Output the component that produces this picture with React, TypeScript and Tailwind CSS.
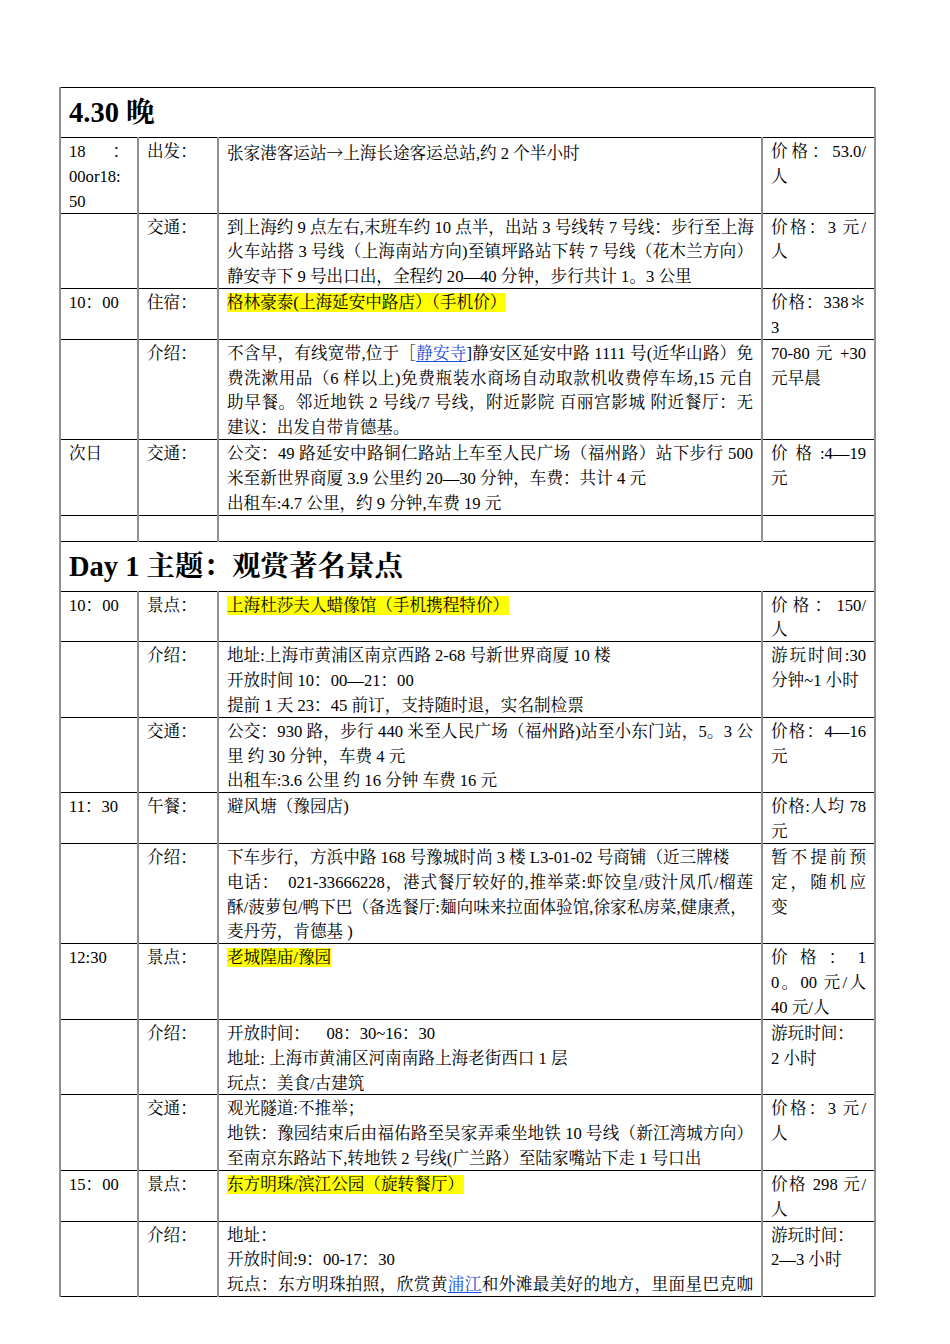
import { ReactNode } from "react";

// one visual line of a cell; `j` stretches it to the cell width like Word's justify
const Ln = ({ children, j }: { children: ReactNode; j?: boolean }) => (
  <div className={j ? "whitespace-nowrap [text-align-last:justify]" : "whitespace-nowrap"}>
    {children}
  </div>
);

const Hl = ({ children }: { children: ReactNode }) => (
  <span className="bg-[#ffff00]">{children}</span>
);

const A = ({ children }: { children: ReactNode }) => (
  <span className="text-[#1d4fd8] underline underline-offset-2">{children}</span>
);

const cell =
  "align-top px-2 border-y border-y-black border-x-2 border-x-[#8f8f8f]";

// shift glyphs down a little without changing the row height
const Box = ({ children }: { children: ReactNode }) => (
  <div className="pt-[2px] -mb-[2px]">{children}</div>
);

const Row = ({
  time,
  label,
  body,
  price,
}: {
  time?: ReactNode;
  label?: string;
  body?: ReactNode;
  price?: ReactNode;
}) => (
  <tr>
    <td className={cell}>
      <Box>{time}</Box>
    </td>
    <td className={cell}>
      <Box>{label && <Ln>{label}</Ln>}</Box>
    </td>
    <td className={cell}>
      <Box>{body}</Box>
    </td>
    <td className={cell}>
      <Box>{price}</Box>
    </td>
  </tr>
);

const Title = ({ children }: { children: ReactNode }) => (
  <tr>
    <td
      colSpan={4}
      className="h-[49px] align-middle px-2 border-y border-y-black border-x-2 border-x-[#8f8f8f] text-[28.5px] font-bold leading-[49px]"
    >
      {children}
    </td>
  </tr>
);

export default function App() {
  return (
    <div className="min-h-[1344px] bg-white pt-[87px] pl-[59px] text-black font-['Liberation_Serif','Noto_Serif_CJK_SC','Noto_Sans_CJK_SC',serif] text-[16.6px] leading-[24.85px]">
      <table className="table-fixed border-collapse w-[815px]">
        <colgroup>
          <col className="w-[78px]" />
          <col className="w-[80px]" />
          <col className="w-[544px]" />
          <col className="w-[113px]" />
        </colgroup>
        <tbody>
          <Title>4.30 晚</Title>
          <Row
            time={
              <>
                <Ln j>18：</Ln>
                <Ln>00or18:</Ln>
                <Ln>50</Ln>
              </>
            }
            label="出发："
            body={
              <Ln>
                张家港客运站
                <span className="font-['Noto_Serif_CJK_SC','Noto_Sans_CJK_SC',serif]">→</span>
                上海长途客运总站,约 2 个半小时
              </Ln>
            }
            price={
              <>
                <Ln j>价格：53.0/</Ln>
                <Ln>人</Ln>
              </>
            }
          />
          <Row
            label="交通："
            body={
              <>
                <Ln j>到上海约 9 点左右,末班车约 10 点半，出站 3 号线转 7 号线：步行至上海</Ln>
                <Ln j>火车站搭 3 号线（上海南站方向)至镇坪路站下转 7 号线（花木兰方向）</Ln>
                <Ln>静安寺下 9 号出口出，全程约 20—40 分钟，步行共计 1。3 公里</Ln>
              </>
            }
            price={
              <>
                <Ln j>价格：3 元/</Ln>
                <Ln>人</Ln>
              </>
            }
          />
          <Row
            time={<Ln>10：00</Ln>}
            label="住宿："
            body={
              <Ln>
                <Hl>格林豪泰(上海延安中路店）（手机价）</Hl>
              </Ln>
            }
            price={
              <>
                <Ln j>价格：338＊</Ln>
                <Ln>3</Ln>
              </>
            }
          />
          <Row
            label="介绍："
            body={
              <>
                <Ln j>
                  不含早，有线宽带,位于［<A>静安寺</A>]静安区延安中路 1111 号(近华山路）免
                </Ln>
                <Ln j>费洗漱用品（6 样以上)免费瓶装水商场自动取款机收费停车场,15 元自</Ln>
                <Ln j>助早餐。邻近地铁 2 号线/7 号线，附近影院 百丽宫影城 附近餐厅：无</Ln>
                <Ln>建议：出发自带肯德基。</Ln>
              </>
            }
            price={
              <>
                <Ln j>70-80 元 +30</Ln>
                <Ln>元早晨</Ln>
              </>
            }
          />
          <Row
            time={<Ln>次日</Ln>}
            label="交通："
            body={
              <>
                <Ln j>公交：49 路延安中路铜仁路站上车至人民广场（福州路）站下步行 500</Ln>
                <Ln>米至新世界商厦 3.9 公里约 20—30 分钟，车费：共计 4 元</Ln>
                <Ln>出租车:4.7 公里，约 9 分钟,车费 19 元</Ln>
              </>
            }
            price={
              <>
                <Ln j>价 格 :4—19</Ln>
                <Ln>元</Ln>
              </>
            }
          />
          <Row body={<Ln>&nbsp;</Ln>} />
          <Title>Day 1 主题：观赏著名景点</Title>
          <Row
            time={<Ln>10：00</Ln>}
            label="景点："
            body={
              <Ln>
                <Hl>上海杜莎夫人蜡像馆（手机携程特价）</Hl>
              </Ln>
            }
            price={
              <>
                <Ln j>价格：150/</Ln>
                <Ln>人</Ln>
              </>
            }
          />
          <Row
            label="介绍："
            body={
              <>
                <Ln>地址:上海市黄浦区南京西路 2-68 号新世界商厦 10 楼</Ln>
                <Ln>开放时间 10：00—21：00</Ln>
                <Ln>提前 1 天 23：45 前订，支持随时退，实名制检票</Ln>
              </>
            }
            price={
              <>
                <Ln j>游玩时间:30</Ln>
                <Ln>分钟~1 小时</Ln>
              </>
            }
          />
          <Row
            label="交通："
            body={
              <>
                <Ln j>公交：930 路，步行 440 米至人民广场（福州路)站至小东门站，5。3 公</Ln>
                <Ln>里 约 30 分钟，车费 4 元</Ln>
                <Ln>出租车:3.6 公里 约 16 分钟 车费 16 元</Ln>
              </>
            }
            price={
              <>
                <Ln j>价格：4—16</Ln>
                <Ln>元</Ln>
              </>
            }
          />
          <Row
            time={<Ln>11：30</Ln>}
            label="午餐："
            body={<Ln>避风塘（豫园店)</Ln>}
            price={
              <>
                <Ln j>价格:人均 78</Ln>
                <Ln>元</Ln>
              </>
            }
          />
          <Row
            label="介绍："
            body={
              <>
                <Ln>下车步行，方浜中路 168 号豫城时尚 3 楼 L3-01-02 号商铺（近三牌楼</Ln>
                <Ln j>电话：{"\u3000"}021-33666228，港式餐厅较好的,推举菜:虾饺皇/豉汁凤爪/榴莲</Ln>
                <Ln>酥/菠萝包/鸭下巴（备选餐厅:麺向味来拉面体验馆,徐家私房菜,健康煮，</Ln>
                <Ln>麦丹劳，肯德基 )</Ln>
              </>
            }
            price={
              <>
                <Ln j>暂不提前预</Ln>
                <Ln j>定，随机应</Ln>
                <Ln>变</Ln>
              </>
            }
          />
          <Row
            time={<Ln>12:30</Ln>}
            label="景点："
            body={
              <Ln>
                <Hl>老城隍庙/豫园</Hl>
              </Ln>
            }
            price={
              <>
                <Ln j>价 格 ： 1</Ln>
                <Ln j>0。00 元/人</Ln>
                <Ln>40 元/人</Ln>
              </>
            }
          />
          <Row
            label="介绍："
            body={
              <>
                <Ln>开放时间：{"\u3000\u00a0\u00a0"}08：30~16：30</Ln>
                <Ln>地址: 上海市黄浦区河南南路上海老街西口 1 层</Ln>
                <Ln>玩点：美食/古建筑</Ln>
              </>
            }
            price={
              <>
                <Ln>游玩时间：</Ln>
                <Ln>2 小时</Ln>
              </>
            }
          />
          <Row
            label="交通："
            body={
              <>
                <Ln>观光隧道:不推举；</Ln>
                <Ln j>地铁：豫园结束后由福佑路至吴家弄乘坐地铁 10 号线（新江湾城方向）</Ln>
                <Ln>至南京东路站下,转地铁 2 号线(广兰路）至陆家嘴站下走 1 号口出</Ln>
              </>
            }
            price={
              <>
                <Ln j>价格：3 元/</Ln>
                <Ln>人</Ln>
              </>
            }
          />
          <Row
            time={<Ln>15：00</Ln>}
            label="景点："
            body={
              <Ln>
                <Hl>东方明珠/滨江公园（旋转餐厅）</Hl>
              </Ln>
            }
            price={
              <>
                <Ln j>价格 298 元/</Ln>
                <Ln>人</Ln>
              </>
            }
          />
          <Row
            label="介绍："
            body={
              <>
                <Ln>地址：</Ln>
                <Ln>开放时间:9：00-17：30</Ln>
                <Ln j>
                  玩点：东方明珠拍照，欣赏黄<A>浦江</A>和外滩最美好的地方，里面星巴克咖
                </Ln>
              </>
            }
            price={
              <>
                <Ln>游玩时间：</Ln>
                <Ln>2—3 小时</Ln>
              </>
            }
          />
        </tbody>
      </table>
    </div>
  );
}
